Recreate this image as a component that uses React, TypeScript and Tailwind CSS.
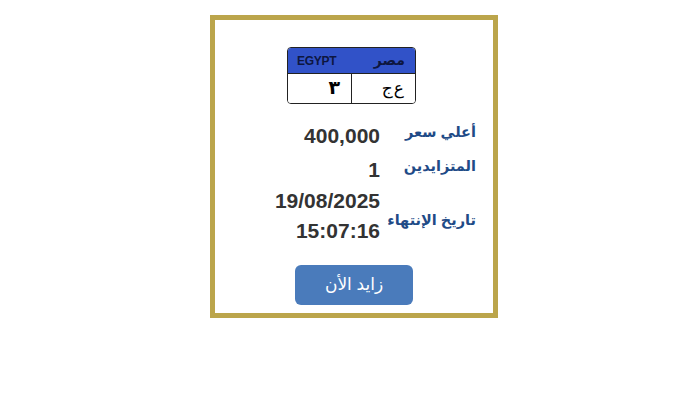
export default function App() {
  return (
    <div className="min-h-[417px] w-[700px] bg-white pl-[210px] pt-[15px] font-['Liberation_Sans','DejaVu_Sans',sans-serif]">
      <div className="flex w-[288px] flex-col items-center border-[5px] border-[#bba54b] bg-white pb-[8px] pt-[27px]">
        <div className="ml-[-5px] flex h-[57px] w-[129px] flex-col overflow-hidden rounded-[4px] border border-[#222]" dir="rtl">
          <div className="flex h-[25px] items-center justify-between bg-[#3152c8] pl-[9px] pr-[10px] text-[#0d1640]">
            <span className="text-[14px] font-bold">مصر</span>
            <span className="text-[12px] font-bold tracking-[-0.3px]">EGYPT</span>
          </div>
          <div className="flex flex-1 border-t border-[#222] bg-white">
            <div className="flex w-[63px] items-center gap-[1px] pr-[11px] text-[17px] text-black">
              <span>ع</span>
              <span>ج</span>
            </div>
            <div className="flex flex-1 items-center border-r border-[#222] pr-[11px] text-[19px] font-bold text-black">٣</div>
          </div>
        </div>

        <div className="mt-[17px] flex w-full flex-col pr-[17px]" dir="rtl">
          <div className="flex items-start">
            <div className="w-[96px] pt-[1px] text-[14.5px] font-bold text-[#1f4b87]">أعلي سعر</div>
            <div className="text-[21px] font-bold leading-[29px] text-[#333]">400,000</div>
          </div>
          <div className="mt-[5px] flex items-start">
            <div className="w-[96px] pt-[1px] text-[14.5px] font-bold text-[#1f4b87]">المتزايدين</div>
            <div className="text-[21px] font-bold leading-[29px] text-[#333]">1</div>
          </div>
          <div className="mt-[2px] flex items-center">
            <div className="w-[96px] pt-[10px] text-[14.5px] font-bold text-[#1f4b87]">تاريخ الإنتهاء</div>
            <div className="flex flex-col items-end text-[21px] font-bold leading-[30px] text-[#333]" dir="ltr">
              <div>19/08/2025</div>
              <div>15:07:16</div>
            </div>
          </div>
        </div>

        <button className="mt-[19px] h-[40px] w-[118px] rounded-[6px] bg-[#4a7bbb] text-[17px] text-white">
          زايد الأن
        </button>
      </div>
    </div>
  );
}
